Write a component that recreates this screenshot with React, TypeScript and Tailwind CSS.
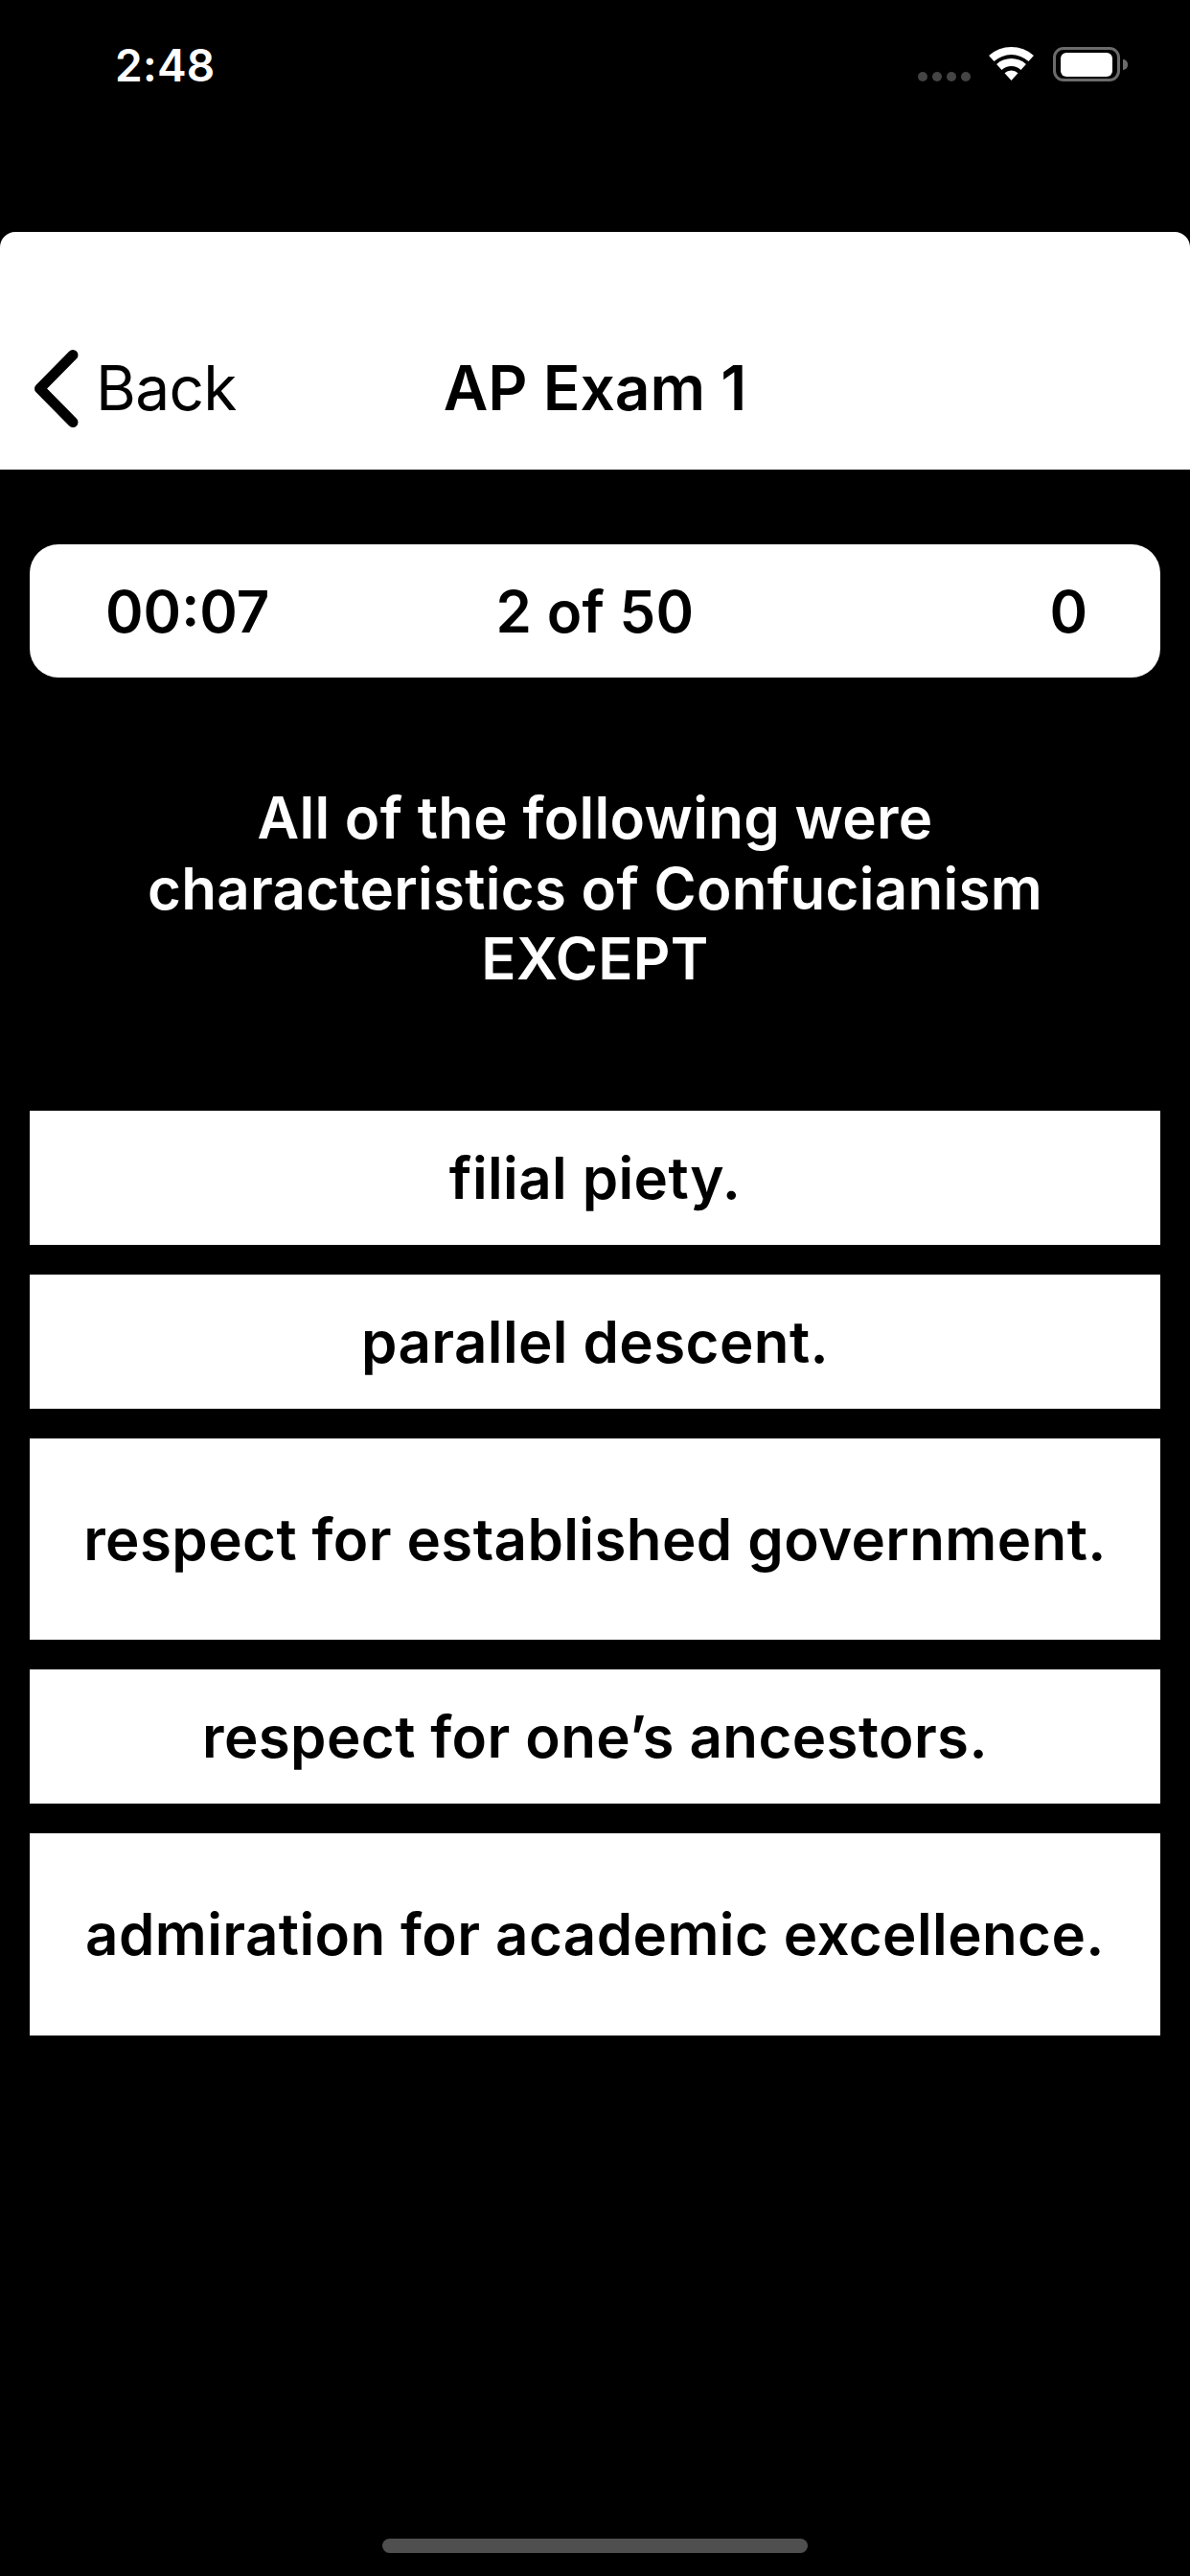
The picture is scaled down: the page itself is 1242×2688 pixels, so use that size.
const OPTIONS = [
  { label: "filial piety.", height: "h-[140px]" },
  { label: "parallel descent.", height: "h-[140px]" },
  { label: "respect for established government.", height: "h-[210px]" },
  { label: "respect for one’s ancestors.", height: "h-[140px]" },
  { label: "admiration for academic excellence.", height: "h-[211px]" }
];

function StatusBar() {
  return (
    <div className="flex h-[242px] items-start justify-between pl-[120px] pr-[65px] pt-[47px]">
      <span className="text-[46px] leading-[42px] font-semibold tracking-[0.3px] text-white">2:48</span>
      <div className="mt-[2px] flex items-start">
        <div className="mt-[26px] flex gap-[5px]">
          <span className="h-[10px] w-[10px] rounded-full bg-[#444444]" />
          <span className="h-[10px] w-[10px] rounded-full bg-[#444444]" />
          <span className="h-[10px] w-[10px] rounded-full bg-[#444444]" />
          <span className="h-[10px] w-[10px] rounded-full bg-[#444444]" />
        </div>
        <svg className="ml-[19px]" width="47" height="35" viewBox="0 0 47 35" fill="#ffffff">
          <path d="M0.1 9 A35 35 0 0 1 46.9 9 L41.5 15 A27 27 0 0 0 5.5 15 Z" />
          <path d="M8.1 17.9 A23 23 0 0 1 38.9 17.9 L33.5 23.9 A15 15 0 0 0 13.5 23.9 Z" />
          <path d="M16.5 27.2 A10.5 10.5 0 0 1 30.5 27.2 L23.5 35 Z" />
        </svg>
        <div className="ml-[20px] flex items-center">
          <div className="flex h-[36px] w-[70px] items-center justify-center rounded-[11px] border-[3px] border-[#6b6b6b]">
            <div className="h-[25px] w-[54px] rounded-[6px] bg-white" />
          </div>
          <div className="ml-[3px] h-[11px] w-[5px] rounded-r-full bg-[#6b6b6b]" />
        </div>
      </div>
    </div>
  );
}

export default function App() {
  return (
    <div className="flex h-[2688px] w-[1242px] flex-col bg-black font-['Inter',sans-serif]">
      <StatusBar />

      <div className="relative flex h-[248px] items-end rounded-t-[16px] bg-white pb-[62px] text-black">
        <svg className="ml-[35px] mb-[-18px]" width="47" height="81" viewBox="0 0 47 81" fill="none">
          <path d="M41 5.5 L6.5 40.5 L41 75.5" stroke="#000000" strokeWidth="11" strokeLinecap="round" strokeLinejoin="round" />
        </svg>
        <span className="ml-[18px] text-[64px] leading-[46px] font-normal tracking-[-0.7px]">Back</span>
        <span className="absolute left-0 right-0 bottom-[62px] text-center text-[64px] leading-[46px] font-semibold">AP Exam 1</span>
      </div>

      <main className="flex flex-col px-[31px] pt-[78px]">
        <div className="grid h-[139px] grid-cols-[331px_518px_331px] items-center rounded-[30px] bg-white text-[60px] font-semibold text-black">
          <span className="pl-[79px]">00:07</span>
          <span className="text-center tracking-[0.3px]">2 of 50</span>
          <span className="pr-[76px] text-right">0</span>
        </div>

        <p className="mt-[110px] text-center text-[60px] leading-[73.5px] font-semibold tracking-[0.3px] text-white">
          All of the following were
          <br />
          characteristics of Confucianism
          <br />
          EXCEPT
        </p>

        <div className="mt-[121px] flex flex-col gap-[31px]">
          {OPTIONS.map((option) => (
            <button
              key={option.label}
              className={`flex w-full items-center justify-center bg-white text-[60px] font-semibold tracking-[0.4px] text-black ${option.height}`}
            >
              {option.label}
            </button>
          ))}
        </div>
      </main>

      <div className="mt-auto mb-[24px] h-[15px] w-[444px] self-center rounded-full bg-[#4f4f4f]" />
    </div>
  );
}
